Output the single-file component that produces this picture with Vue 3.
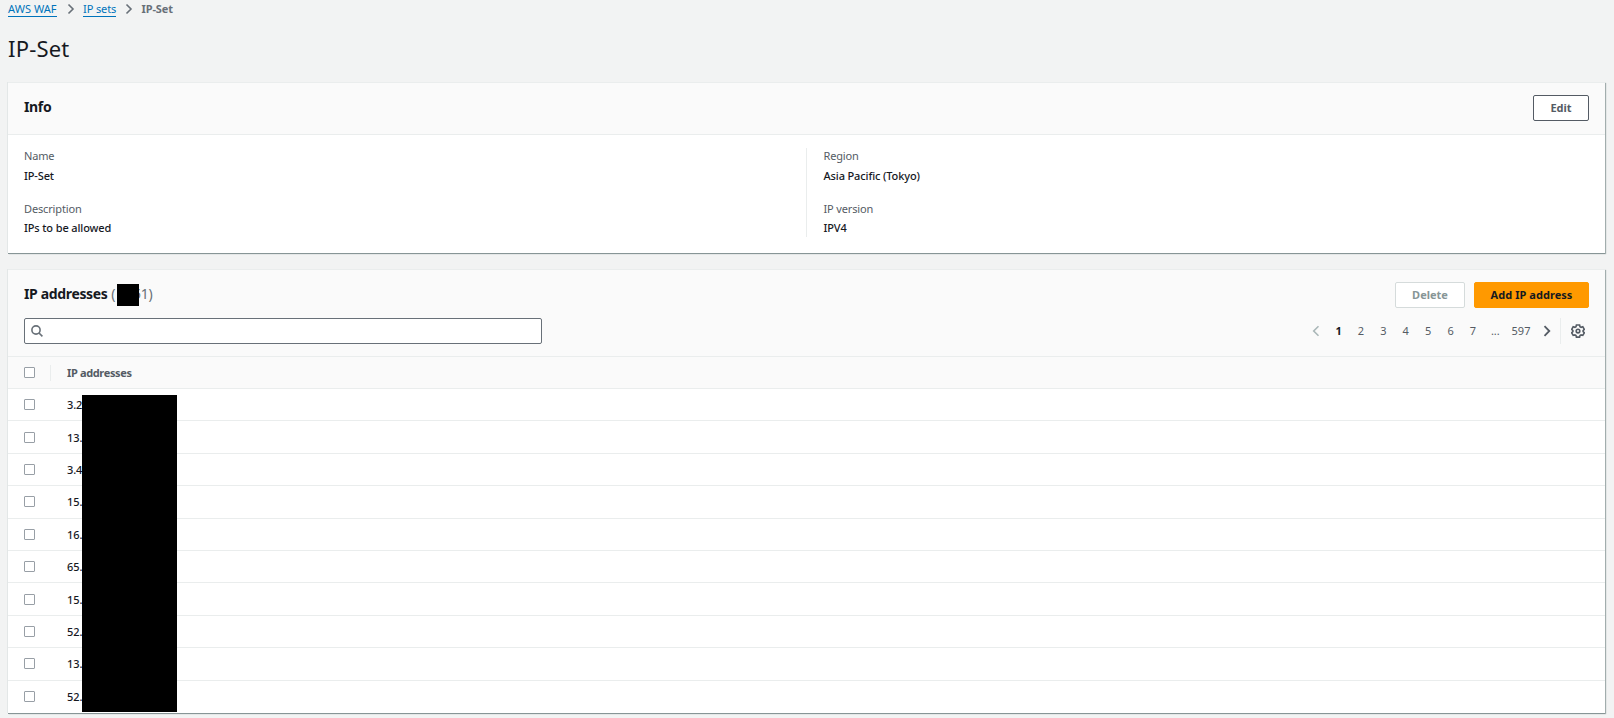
<script setup>
import { ref, computed } from 'vue'

const columns = [
  [
    { label: 'Name', value: 'IP-Set' },
    { label: 'Description', value: 'IPs to be allowed' }
  ],
  [
    { label: 'Region', value: 'Asia Pacific (Tokyo)' },
    { label: 'IP version', value: 'IPV4' }
  ]
]

const addresses = ['3.2', '13.', '3.4', '15.', '16.', '65.', '15.', '52.', '13.', '52.']
const pages = ['1', '2', '3', '4', '5', '6', '7', '...', '597']

const currentPage = ref('1')
const search = ref('')
const selected = ref([])

const allSelected = computed(() => selected.value.length === addresses.length)

const toggleAll = () => {
  selected.value = allSelected.value ? [] : addresses.map((_, i) => i)
}

const goTo = (page) => {
  if (page !== '...') currentPage.value = page
}
</script>

<template>
  <div class="page">
    <nav class="breadcrumb">
      <a class="link waf">AWS WAF</a>
      <svg class="sep" viewBox="0 0 8 12"><path d="M1.5 1.5 6 6 1.5 10.5" /></svg>
      <a class="link sets">IP sets</a>
      <svg class="sep" viewBox="0 0 8 12"><path d="M1.5 1.5 6 6 1.5 10.5" /></svg>
      <span class="current">IP-Set</span>
    </nav>

    <h1>IP-Set</h1>

    <section class="panel info">
      <header class="info-header">
        <h2>Info</h2>
        <button class="btn edit">Edit</button>
      </header>
      <div class="info-body">
        <div v-for="(col, i) in columns" :key="i" class="col">
          <div v-for="item in col" :key="item.label" class="field">
            <div class="label">{{ item.label }}</div>
            <div class="value">{{ item.value }}</div>
          </div>
        </div>
      </div>
    </section>

    <section class="panel list">
      <header class="list-header">
        <div class="title-row">
          <h2>IP addresses <span class="count">(<i class="mask"></i>51)</span></h2>
          <div class="actions">
            <button class="btn delete" disabled>Delete</button>
            <button class="btn primary">Add IP address</button>
          </div>
        </div>
        <div class="tools">
          <label class="search">
            <svg viewBox="0 0 12 12"><circle cx="5" cy="5" r="4.1" /><path d="M8 8l3.4 3.4" /></svg>
            <input v-model="search" type="text" />
          </label>
          <div class="pagination">
            <svg class="arrow prev" viewBox="0 0 8 12"><path d="M6.5 1.2 1.7 6l4.8 4.8" /></svg>
            <span
              v-for="page in pages"
              :key="page"
              :class="['num', { active: page === currentPage, last: page === '597' }]"
              @click="goTo(page)"
            >{{ page }}</span>
            <svg class="arrow next" viewBox="0 0 8 12"><path d="M1.5 1.2 6.3 6l-4.8 4.8" /></svg>
            <span class="settings">
              <svg viewBox="0 0 14 14">
                <path d="M5.4 1h3.2l.4 1.7 1.1.6 1.7-.5 1.5 2.6L12.1 6.6v1l1.2 1.2-1.5 2.6-1.7-.5-1.1.6-.4 1.6H5.4L5 11.5l-1.1-.6-1.7.5L.7 8.8l1.2-1.2v-1L.7 5.4l1.5-2.6 1.7.5L5 2.7z" />
                <circle cx="7" cy="7.1" r="1.8" />
              </svg>
            </span>
          </div>
        </div>
      </header>

      <div class="table">
        <div class="row head">
          <span :class="['check', { on: allSelected }]" @click="toggleAll"></span>
          <span class="head-label">IP addresses</span>
        </div>
        <div v-for="(ip, i) in addresses" :key="i" class="row">
          <label class="pick">
            <input v-model="selected" type="checkbox" :value="i" />
            <span :class="['check', { on: selected.includes(i) }]"></span>
          </label>
          <span class="ip">{{ ip }}</span>
        </div>
        <div class="redacted"></div>
      </div>
    </section>
  </div>
</template>

<style>
body {
  background: #f2f3f3;
  overflow: hidden;
}
</style>

<style scoped>
.page {
  box-sizing: border-box;
  height: 718px;
  padding: 0 9px 0 8px;
  overflow: hidden;
  font-family: "Noto Sans", "Open Sans", sans-serif;
  font-size: 11px;
  color: #16191f;
}

.page * {
  box-sizing: border-box;
}

h1,
h2 {
  margin: 0;
}

svg {
  display: block;
  fill: none;
  stroke: #687078;
  stroke-width: 1.6;
}

.breadcrumb {
  display: flex;
  align-items: flex-start;
  height: 18px;
  padding-top: 2px;
  line-height: 14px;
}

.link {
  height: 15px;
  color: #0073bb;
  border-bottom: 1px solid #0073bb;
  white-space: nowrap;
}

.waf {
  width: 49px;
  letter-spacing: 0.05px;
}

.sets {
  width: 33px;
  letter-spacing: -0.1px;
}

.sep {
  width: 8px;
  height: 12px;
  margin: 1px 8px 0 10px;
}

.sets + .sep {
  margin-left: 9px;
}

.current {
  margin-left: 0.5px;
  font-weight: 700;
  color: #687078;
  letter-spacing: -0.1px;
}

h1 {
  height: 64px;
  padding-top: 16px;
  font-size: 22px;
  line-height: 28px;
  font-weight: 400;
  letter-spacing: 0.2px;
}

h2 {
  font-size: 14px;
  line-height: 20px;
  font-weight: 700;
  letter-spacing: -0.35px;
}

.panel {
  background: #fff;
  border-top: 1px solid #eaeded;
  box-shadow: 0 1px 0 #879596, 1px 1px 1px #a2adad, -1px 0 0 #e3e7e7;
}

.info {
  height: 171px;
  margin-bottom: 16px;
}

.info-header {
  display: flex;
  justify-content: space-between;
  height: 52px;
  padding: 12px 16px 0;
  background: #fafafa;
  border-bottom: 1px solid #eaeded;
}

.info-header h2 {
  margin-top: 2px;
}

.btn {
  height: 26px;
  padding: 0;
  font-family: inherit;
  font-size: 11px;
  font-weight: 700;
  line-height: 24px;
  color: #545b64;
  background: #fff;
  border: 1px solid #545b64;
  border-radius: 2px;
}

.edit {
  width: 56px;
}

.info-body {
  display: flex;
  padding: 13px 16px 0;
}

.col {
  width: 782px;
  height: 89px;
}

.col + .col {
  padding-left: 16.5px;
  border-left: 1px solid #eaeded;
}

.field {
  height: 53px;
  margin-top: -1px;
}

.field + .field {
  margin-top: 0;
}

.label {
  height: 20px;
  line-height: 17px;
  color: #545b64;
  letter-spacing: -0.15px;
}

.field + .field .label {
  height: 19px;
}

.value {
  line-height: 17px;
  font-weight: 500;
  letter-spacing: -0.13px;
}

.list {
  height: 444px;
}

.list-header {
  height: 87px;
  padding: 12px 16px 0;
  background: #fafafa;
  border-bottom: 1px solid #eaeded;
}

.title-row {
  display: flex;
  justify-content: space-between;
  height: 36px;
}

.title-row h2 {
  margin-top: 2px;
}

.count {
  margin-left: 0.5px;
  font-weight: 400;
  color: #687078;
}

.mask {
  display: inline-block;
  width: 22px;
  height: 22px;
  margin: -4px -5px -2px 1px;
  position: relative;
  top: 1px;
  left: 1px;
  vertical-align: middle;
  background: #000;
}

.actions {
  display: flex;
  gap: 9px;
}

.delete {
  width: 70px;
  color: #879596;
  border-color: #d5dbdb;
}

.primary {
  width: 115px;
  color: #16191f;
  background: #ff9900;
  border-color: #ff9900;
  letter-spacing: 0.05px;
}

.tools {
  display: flex;
  justify-content: space-between;
}

.search {
  display: flex;
  align-items: center;
  width: 518px;
  height: 26px;
  padding-left: 6px;
  background: #fff;
  border: 1px solid #687078;
  border-radius: 2px;
}

.search svg {
  width: 12px;
  height: 12px;
}

.search input {
  flex: 1;
  margin-left: 6px;
  font: inherit;
  background: none;
  border: 0;
  outline: none;
}

.pagination {
  display: flex;
  align-items: center;
  height: 26px;
  color: #545b64;
}

.arrow {
  width: 8px;
  height: 12px;
}

.prev {
  margin-right: 7px;
  stroke: #aab7b8;
}

.next {
  margin: 0 9.5px 0 7px;
  stroke: #545b64;
  stroke-width: 1.8;
}

.num {
  width: 22.4px;
  line-height: 16px;
  text-align: center;
  cursor: pointer;
}

.num.active {
  font-weight: 700;
  color: #16191f;
}

.num.last {
  width: 29px;
}

.settings {
  display: flex;
  align-items: center;
  width: 29px;
  height: 26px;
  padding-left: 10px;
  border-left: 1px solid #eaeded;
}

.settings svg {
  width: 14px;
  height: 14px;
  stroke: #545b64;
  stroke-width: 1.6;
}

.table {
  position: relative;
}

.row {
  display: flex;
  align-items: center;
  height: 32.4px;
  padding-left: 16px;
  border-bottom: 1px solid #eaeded;
}

.row:nth-child(11) {
  border-bottom: 0;
}

.head {
  height: 32px;
  background: #fafafa;
}

.check {
  display: block;
  width: 11px;
  height: 11px;
  background: #fff;
  border: 1px solid #989fa6;
  border-radius: 1px;
}

.check.on {
  background: #0073bb;
  border-color: #0073bb;
}

.pick input {
  display: none;
}

.head-label {
  height: 16px;
  margin-left: 15px;
  padding-left: 16px;
  line-height: 16px;
  font-weight: 700;
  color: #545b64;
  letter-spacing: -0.35px;
  border-left: 1px solid #eaeded;
}

.ip {
  margin-left: 32px;
  font-weight: 500;
  letter-spacing: -0.1px;
}

/* covers everything after the first octet */
.redacted {
  position: absolute;
  left: 74px;
  top: 38px;
  width: 95px;
  height: 317px;
  background: #000;
}
</style>
